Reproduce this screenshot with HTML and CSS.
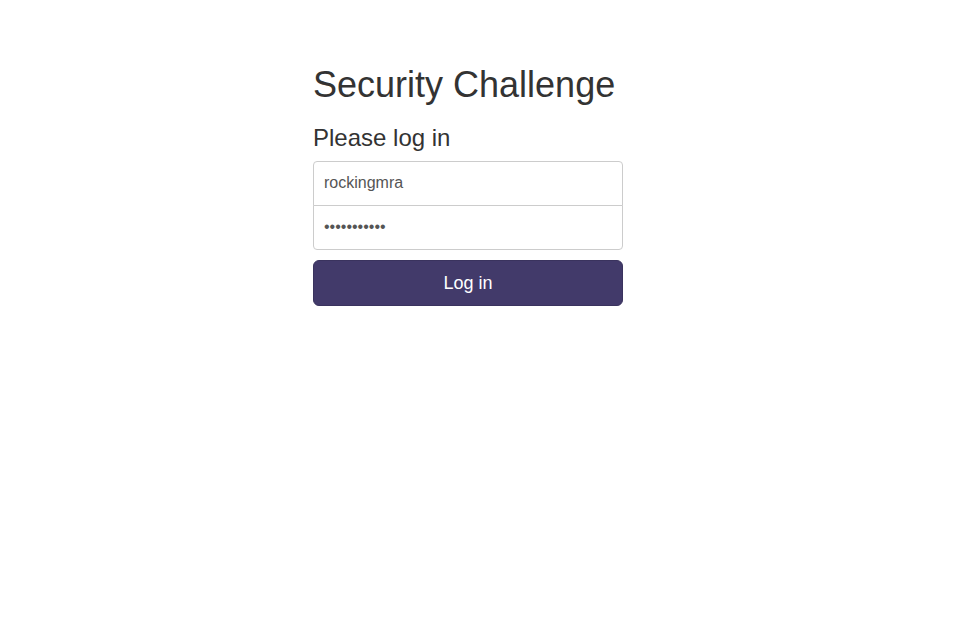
FILE: index.html
```html
<!DOCTYPE html>
<html>
<head>
<meta charset="utf-8">
<link rel="stylesheet" href="styles.css">
</head>
<body>
<div class="container">
  <h1 class="title">Security Challenge</h1>
  <form class="form-signin">
    <h2 class="heading">Please log in</h2>
    <input class="field field-top" type="text" value="rockingmra">
    <input class="field field-bottom" type="password" value="abcdefghijk">
    <button class="btn" type="button">Log in</button>
  </form>
</div>
</body>
</html>
```
FILE: styles.css
```css
* { box-sizing: border-box; }
html, body { margin: 0; padding: 0; background: #fff; }
body {
  font-family: "Liberation Sans", Arial, sans-serif;
  color: #333;
  padding-top: 60px;
}
.container {
  width: 330px;
  margin: 0 auto;
  padding-right: 20px;
}
.title {
  font-size: 36px;
  font-weight: 500;
  line-height: 1.1;
  margin: 0 0 0 0;
  padding-top: 5px;
}
.form-signin { display: flex; flex-direction: column; }
.heading {
  font-size: 24px;
  font-weight: 500;
  line-height: 1.1;
  margin: 20px 0 10px 0;
}
.field {
  display: block;
  width: 100%;
  font-family: "Liberation Sans", Arial, sans-serif;
  font-size: 16px;
  line-height: 22px;
  padding: 10px;
  color: #555;
  border: 1px solid #ccc;
  background: #fff;
  height: 45px;
  outline: none;
}
.field-top { border-radius: 4px 4px 0 0; }
.field-bottom { border-radius: 0 0 4px 4px; margin-top: -1px; }
.btn {
  margin-top: 10px;
  height: 46px;
  width: 100%;
  font-family: "Liberation Sans", Arial, sans-serif;
  font-size: 18px;
  line-height: 24px;
  color: #fff;
  background: #423a6a;
  border: 1px solid #3a335e;
  border-radius: 6px;
  padding: 10px 16px;
}
```
